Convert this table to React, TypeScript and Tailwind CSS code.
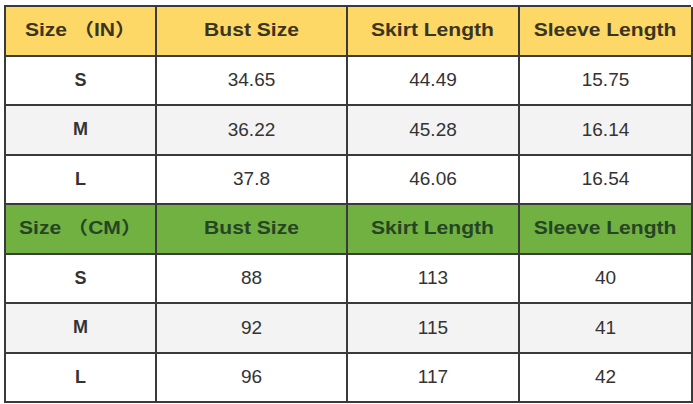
const inchRows = [
  ['S', '34.65', '44.49', '15.75'],
  ['M', '36.22', '45.28', '16.14'],
  ['L', '37.8', '46.06', '16.54'],
];

const cmRows = [
  ['S', '88', '113', '40'],
  ['M', '92', '115', '41'],
  ['L', '96', '117', '42'],
];

function HeaderRow({ unit, bg, fg }: { unit: string; bg: string; fg: string }) {
  const labels = [`Size （${unit}）`, 'Bust Size', 'Skirt Length', 'Sleeve Length'];
  return (
    <>
      {labels.map((l) => (
        <div
          key={l}
          className={`flex items-center justify-center border-r-2 border-b-2 border-[#3a3a3a] ${bg} ${fg}`}
        >
          <span className="inline-block origin-center scale-x-[1.17] text-[18px] font-bold">{l}</span>
        </div>
      ))}
    </>
  );
}

function BodyRows({ rows }: { rows: string[][] }) {
  return (
    <>
      {rows.map((r, i) =>
        r.map((c, j) => (
          <div
            key={`${i}-${j}`}
            className={`flex items-center justify-center border-r-2 border-b-2 border-[#3a3a3a] text-[#333] ${
              i === 1 ? 'bg-[#f3f3f3]' : 'bg-white'
            } ${j === 0 ? 'font-bold text-[18px]' : 'text-[19px]'}`}
          >
            {c}
          </div>
        ))
      )}
    </>
  );
}

export default function App() {
  return (
    <div
      className="h-[404px] w-[693px] bg-white pl-[4px] pt-[5px]"
      style={{ fontFamily: '"Liberation Sans", Arial, "Noto Sans CJK SC", sans-serif' }}
    >
      <div className="grid w-[687px] grid-cols-[151px_191px_172px_173px] grid-rows-[repeat(8,49.5px)] border-l-2 border-t-2 border-[#3a3a3a]">
        <HeaderRow unit="IN" bg="bg-[#fed866]" fg="text-[#3a3522]" />
        <BodyRows rows={inchRows} />
        <HeaderRow unit="CM" bg="bg-[#70b142]" fg="text-[#264524]" />
        <BodyRows rows={cmRows} />
      </div>
    </div>
  );
}
